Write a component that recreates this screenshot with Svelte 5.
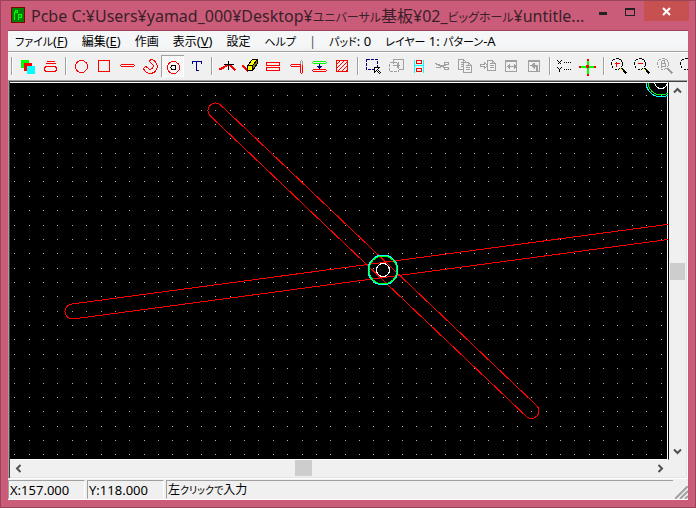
<script lang="ts">
  type Tool = { label: string, art: string, disabled?: boolean }

  const pitch = 14.36
  const red = '#f00'
  const gray = '#a0a0a0'

  const menus = [
    { kana: 'ファイル', key: 'F' },
    { text: '編集', key: 'E' },
    { text: '作画' },
    { text: '表示', key: 'V' },
    { text: '設定' },
    { kana: 'ヘルプ' },
  ]

  const glass = (c: string) =>
    `<circle cx="9.5" cy="8.5" r="5.5" stroke="${c}" stroke-dasharray="3 1"/><path d="M14 13l5 5" stroke="${c}" stroke-width="2"/>`
  const page = (x: number, y: number) =>
    `<path d="M${x} ${y}h5l3 3v7h-8zM${x + 5} ${y}v3h3M${x + 2} ${y + 3}h2M${x + 2} ${y + 5}h4M${x + 2} ${y + 7}h4" stroke="${gray}" fill="#f0f0f0"/>`

  const groups: Tool[][] = [
    [
      { label: 'レイヤー', art: '<path d="M5 4h8v8h-8z" fill="#0f0" stroke="none"/><path d="M8 7h8v8h-8z" fill="red" stroke="none"/><path d="M11 10h8v8h-8z" fill="#0ff" stroke="none"/>' },
      { label: '線幅', art: `<path d="M8 6h8M7 8h10" stroke="${red}"/><rect x="6" y="11" width="12" height="5" rx="3" stroke="${red}"/>` },
    ],
    [
      { label: '円', art: `<circle cx="12" cy="11" r="6" stroke="${red}"/>` },
      { label: '四角', art: `<path d="M6 5h11v11h-11z" stroke="${red}"/>` },
      { label: 'ライン', art: `<path d="M6 9h12l1 1l-1 1h-12l-1 -1z" stroke="${red}"/>` },
      { label: '円弧', art: `<path d="M12 4a7 7 0 1 1 -7 9l2 -2l2 1a3 3 0 1 0 4 -4l-2 -2z" stroke="${red}"/>` },
      { label: 'パッド', art: `<circle cx="12" cy="12" r="6" stroke="${red}"/><circle cx="12" cy="12" r="2.5" stroke="#000"/>` },
      { label: '文字', art: '<path d="M8 8v-2h9v2M12 6v9M11 15h3" stroke="#000080"/>' },
    ],
    [
      { label: '頂点', art: `<path d="M4 14l2 -1l2 -1l5 -3l3 2l4 4" stroke="${red}" stroke-width="2"/><path d="M8 9h10M13 5v9" stroke="#000"/>` },
      { label: '消去', art: `<path d="M4 10l6 6" stroke="${red}" stroke-width="2"/><path d="M9 10l5 -6h5l-5 6z" fill="#ff0" stroke="#000"/><path d="M14 10l5 -6v4l-5 7z" fill="#808000" stroke="#000"/><path d="M9 10h5v5h-5z" fill="#ff0" stroke="#000"/>` },
      { label: '平行', art: `<rect x="5" y="7" width="13" height="3" rx="1" stroke="${red}"/><rect x="5" y="12" width="13" height="3" rx="1" stroke="${red}"/>` },
      { label: '延長', art: `<path d="M16 9v-3l1 -1l1 1v3" stroke="${gray}"/><path d="M16 9h-9l-1 1l1 1h9M16 9v8l1 1l1 -1v-8" stroke="${red}"/>` },
      { label: '移動', art: `<path d="M6 6h12l1 1l-1 1h-12l-1 -1z" stroke="#0f0"/><path d="M6 14h12l1 1l-1 1h-12l-1 -1z" stroke="${red}"/><path d="M12 8v5M10 11h4" stroke="#000080"/><path d="M9 10h6l-3 4z" fill="#000080" stroke="none"/>` },
      { label: '塗り', art: `<path d="M6 5h11v11h-11zM6 9l4 -4M6 13l8 -8M7 16l10 -10M11 16l6 -6M15 16l2 -2" stroke="${red}"/>` },
    ],
    [
      { label: '選択', art: '<path d="M5 4h11v10h-11z" stroke="#000080" stroke-dasharray="3 1"/><path d="M13 12h5l-2 2l3 3l-1 1l-3 -3l-2 2z" stroke="#000" fill="#fff"/>' },
      { label: 'コピー移動', disabled: true, art: `<path d="M9 8v-4h10v10h-5" stroke="${gray}"/><path d="M5 7h9v9h-9z" stroke="${gray}" stroke-dasharray="3 1"/><path d="M8 10h7M12 7l3 3l-3 3M13 8v4" stroke="${gray}"/>` },
      { label: '整列', art: `<path d="M7 4v13M16 4v13M7 10h9" stroke="#0ff"/><path d="M9 5h5v3h-5zM9 13h5v3h-5z" stroke="${red}"/>` },
      { label: '切り取り', disabled: true, art: `<path d="M5 8l9 4M5 12h4l7 -3" stroke="${gray}" stroke-width="1.5"/><ellipse cx="16" cy="8" rx="2.5" ry="1.5" stroke="${gray}"/><ellipse cx="16" cy="13" rx="2.5" ry="1.5" stroke="${gray}"/>` },
      { label: 'コピー', disabled: true, art: page(5, 4) + page(10, 7) },
      { label: '貼り付け', disabled: true, art: `${page(11, 5)}<path d="M4 9h4v-2l3 3l-3 3v-2h-4z" stroke="${gray}"/>` },
      { label: '反転', disabled: true, art: `<path d="M6 5h11v11h-11zM6 6h11M8 11h7" stroke="${gray}"/><path d="M7 11l3 -3v6zM17 11l-3 -3v6z" fill="${gray}"/>` },
      { label: '回転', disabled: true, art: `<path d="M6 5h11v11h-11zM6 6h11" stroke="${gray}"/><path d="M10 10h4v5" stroke="${gray}" stroke-width="2"/><path d="M8 10l4 -3v6z" fill="${gray}"/>` },
    ],
    [
      { label: '座標', art: '<path d="M4 5l4 4M8 5l-4 4M4 12l2 2l2 -2M6 14v2" stroke="#000"/><path d="M10 7h8M10 14h8" stroke="#000" stroke-dasharray="1 1"/>' },
      { label: '原点', art: '<path d="M3 11h15M11 4v15" stroke="#0f0" stroke-width="2"/><path d="M2 10h2v2h-2zM17 10h2v2h-2zM10 3h2v2h-2zM10 18h2v2h-2zM9 9h3v3h-3z" fill="red" stroke="none"/>' },
    ],
    [
      { label: '拡大', art: `${glass('#000')}<path d="M13 13l3 3" stroke="#ff0"/><path d="M7 8h5M9 6v5" stroke="${red}"/>` },
      { label: '縮小', art: `${glass('#000')}<path d="M13 13l3 3" stroke="#ff0"/><path d="M7 8h5" stroke="${red}"/>` },
      { label: '前の倍率', disabled: true, art: `${glass(gray)}<path d="M8 5v7M8 5h3v3h-3M8 8h4v3h-4" stroke="${gray}"/>` },
      { label: '全体', art: glass('#000') },
    ],
  ]

  let current = $state('パッド')
  let width = $state(657)
  let height = $state(376)

  let dots = $derived.by(() => {
    let d = ''
    for (let x = 4.85; x < width; x += pitch) {
      for (let y = 12.8; y < height; y += pitch) {
        d += `M${Math.floor(x)} ${Math.floor(y)}h1v1h-1z`
      }
    }
    return d
  })

  const tracks = [
    { x: 205.5, y: 27.5, angle: 43.56, length: 436 },
    { x: 62.5, y: 228.5, angle: -7.61, length: 900 },
  ]
  const pads = [{ x: 373, y: 187, gap: 1 }, { x: 651, y: -1, gap: 2 }]
  const scroll = { x: 0.44, y: 0.5 }
</script>

<div class="window">
  <header class="titlebar">
    <svg class="logo" width="14" height="16" viewBox="0 0 14 16" shape-rendering="crispEdges">
      <path d="M0 0h14v16h-14z" fill="#800000" />
      <path d="M1 1h12v14h-12z" fill="#008000" />
      <path d="M3.500 13v-8h1v-2h2v2h-2M7.500 13v-6h3v3h-3" fill="none" stroke="#0f0" />
    </svg>
    <h1>Pcbe C:¥Users¥yamad_000¥Desktop¥<span class="kana">ユニバーサル</span>基板¥02_<span class="kana">ビッグホール</span>¥untitle...</h1>
    <div class="winButtons">
      <button aria-label="最小化"><svg width="11" height="11"><path d="M1 6h8v3h-8z" fill="#222" /></svg></button>
      <button aria-label="最大化"><svg width="11" height="11" shape-rendering="crispEdges"><path d="M0 2h10v8h-10zM1 4v5h8v-5z" fill="#222" fill-rule="evenodd" /></svg></button>
      <button class="close" aria-label="閉じる"><svg width="10" height="9"><path d="M1 1l7 7M8 1l-7 7" stroke="#fff" stroke-width="2" /></svg></button>
    </div>
  </header>

  <div class="client">
    <nav class="menubar">
      {#each menus as m}
        <button>{#if m.kana}<span class="kana">{m.kana}</span>{:else}<span class="kanji">{m.text}</span>{/if}{#if m.key}(<u>{m.key}</u>){/if}</button>
      {/each}
      <span class="item bar">|</span>
      <span class="item"><span class="kana">パッド</span>: 0</span>
      <span class="item"><span class="kana">レイヤー</span> 1: <span class="kana">パターン</span>-A</span>
    </nav>

    <div class="toolbar">
      {#each groups as tools}
        <div class="sep"></div>
        {#each tools as tool}
          <button
            class="tool"
            class:pressed={tool.label === current}
            aria-label={tool.label}
            disabled={tool.disabled}
            onclick={() => current = tool.label}
          >
            <svg width="23" height="22" shape-rendering="crispEdges" fill="none"><g transform="translate(.5 .5)">{@html tool.art}</g></svg>
          </button>
        {/each}
      {/each}
    </div>

    <main class="frame">
      <div class="board" bind:clientWidth={width} bind:clientHeight={height}>
        <svg width="100%" height="100%" shape-rendering="crispEdges" fill="none">
          <path d={dots} fill="#b4b4b4" />
          {#each tracks as t}
            <rect x="-7.5" y="-7.5" width={t.length + 15} height="15" rx="7.5" stroke="#f00" transform="translate({t.x} {t.y}) rotate({t.angle})" />
          {/each}
          {#each pads as p}
            <circle cx={p.x} cy={p.y} r="15" stroke="#0ff" />
            <circle cx={p.x} cy={p.y} r={15 - p.gap} stroke="#0f0" />
            <circle cx={p.x} cy={p.y} r="6.5" stroke="#fff" />
          {/each}
        </svg>
      </div>
      <div class="vscroll" style="grid-template-rows: 17px {scroll.y}fr 17px {1 - scroll.y}fr 17px">
        <button aria-label="上へ"><svg width="9" height="7"><path d="M1 5.500l3.500 -3.500l3.500 3.500" /></svg></button>
        <div class="thumb"></div>
        <button class="last" aria-label="下へ"><svg width="9" height="7"><path d="M1 1.500l3.500 3.500l3.500 -3.500" /></svg></button>
      </div>
      <div class="hscroll" style="grid-template-columns: 17px {scroll.x}fr 17px {1 - scroll.x}fr 17px">
        <button aria-label="左へ"><svg width="7" height="9"><path d="M5.500 1l-3.500 3.500l3.500 3.500" /></svg></button>
        <div class="thumb"></div>
        <button class="last" aria-label="右へ"><svg width="7" height="9"><path d="M1.500 1l3.500 3.500l-3.500 3.500" /></svg></button>
      </div>
    </main>

    <footer class="status">
      <div class="panel coord">X:157.000</div>
      <div class="panel coord">Y:118.000</div>
      <div class="panel message">左<span class="kana">クリックで</span>入力</div>
      <svg class="grip" width="13" height="13" stroke="#a0a0a0" stroke-width="2"><path d="M0 13l13 -13M5 13l8 -8M10 13l3 -3" /></svg>
    </footer>
  </div>
</div>

<style>
  :global(body) {
    margin: 0;
  }
  .window {
    box-sizing: border-box;
    height: 100vh;
    display: flex;
    flex-direction: column;
    padding: 0 7px 7px;
    border: 1px solid #994459;
    background: #cb5c79;
    font-family: "Noto Sans", "Noto Sans CJK JP", sans-serif;
    font-size: 13px;
    color: #000;
    overflow: hidden;
  }
  button {
    font: inherit;
    color: inherit;
    padding: 0;
    border: none;
    background: none;
  }
  .kana {
    font-size: 11px;
    font-feature-settings: "palt";
  }
  .kanji {
    font-size: 12px;
  }
  .titlebar {
    display: flex;
    align-items: flex-start;
    height: 29px;
    flex: none;
  }
  .logo {
    margin: 6px 6px 0 3px;
    flex: none;
  }
  .titlebar h1 {
    flex: 1;
    min-width: 0;
    margin: 0;
    font-size: 16px;
    line-height: 30px;
    font-weight: normal;
    color: #3a2028;
    white-space: nowrap;
    overflow: hidden;
  }
  .titlebar .kana {
    font-size: 12px;
  }
  .winButtons {
    display: flex;
    flex: none;
    margin-right: -1px;
  }
  .winButtons button {
    width: 27px;
    height: 20px;
    display: flex;
    align-items: center;
    justify-content: center;
  }
  .winButtons .close {
    width: 45px;
    background: #c75050;
  }
  .client {
    flex: 1;
    min-height: 0;
    display: flex;
    flex-direction: column;
    background: #f0f0f0;
    border-top: 1px solid #994459;
  }
  .menubar {
    display: flex;
    align-items: center;
    height: 20px;
    flex: none;
    background: linear-gradient(#f5f6f7 75%, #f0f0f0);
    border-bottom: 1px solid #a0a0a0;
    white-space: nowrap;
  }
  .menubar button, .menubar .item {
    padding: 0 7px;
    line-height: 18px;
  }
  .menubar .bar {
    padding: 0 6px;
    color: #555;
  }
  .toolbar {
    display: flex;
    align-items: center;
    height: 26px;
    flex: none;
    border-top: 1px solid #fff;
    padding-bottom: 1px;
    overflow: hidden;
  }
  .sep {
    flex: none;
    width: 1px;
    height: 18px;
    margin: 0 2px 0 4px;
    border-right: 1px solid #fff;
    background: #a0a0a0;
  }
  .sep:first-child {
    margin-left: 3px;
  }
  .tool {
    box-sizing: border-box;
    flex: none;
    width: 23px;
    height: 22px;
  }
  .tool svg {
    display: block;
  }
  .tool.pressed {
    box-shadow: inset 1px 1px #a0a0a0, inset -1px -1px #fff;
    background: repeating-conic-gradient(#fff 0 25%, #f0f0f0 0 50%) 0 0 / 2px 2px;
  }
  .frame {
    flex: 1;
    min-height: 0;
    display: grid;
    grid-template-columns: 1fr 17px;
    grid-template-rows: 1fr 17px;
    border: 1px solid;
    border-color: #a0a0a0 #fff #fff #a0a0a0;
    box-shadow: inset 1px 1px #404040, inset -1px -1px #e3e3e3;
    padding: 1px;
  }
  .board {
    min-width: 0;
    min-height: 0;
    background: #000;
    border-top: 1px solid #fff;
    border-bottom: 1px solid #fff;
    border-right: 1px solid #000;
    box-shadow: inset -1px 0 #fff;
    overflow: hidden;
  }
  .board svg {
    display: block;
  }
  .vscroll, .hscroll {
    display: grid;
  }
  .vscroll {
    grid-column: 2;
  }
  .hscroll {
    grid-column: 1;
  }
  .vscroll .thumb {
    grid-row: 3;
    margin: 0 1px;
  }
  .vscroll .last {
    grid-row: 5;
  }
  .hscroll .thumb {
    grid-column: 3;
    margin: 0 0 1px;
  }
  .hscroll .last {
    grid-column: 5;
  }
  .thumb {
    background: #cdcdcd;
  }
  .vscroll button, .hscroll button {
    display: flex;
    align-items: center;
    justify-content: center;
  }
  .vscroll path, .hscroll path {
    fill: none;
    stroke: #505050;
    stroke-width: 2;
  }
  .status {
    display: flex;
    align-items: stretch;
    gap: 2px;
    height: 19px;
    flex: none;
    padding-top: 1px;
    line-height: 18px;
    border-bottom: 1px solid #fff;
  }
  .panel {
    box-sizing: border-box;
    border: 1px solid;
    border-color: #a0a0a0 #fff transparent #a0a0a0;
    padding: 0 1px;
    white-space: nowrap;
  }
  .coord {
    width: 77px;
  }
  .message {
    flex: 1;
    font-size: 12px;
    border-right: none;
  }
  .message .kana {
    font-size: 10px;
  }
  .grip {
    align-self: flex-end;
    flex: none;
  }
</style>
